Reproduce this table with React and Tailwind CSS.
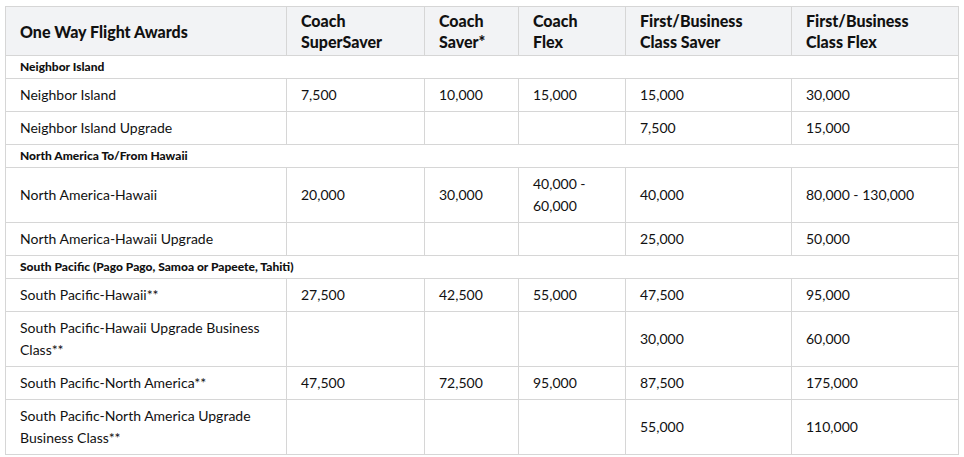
const columns = [
  "One Way Flight Awards",
  ["Coach", "SuperSaver"],
  ["Coach", "Saver*"],
  ["Coach", "Flex"],
  ["First/Business", "Class Saver"],
  ["First/Business", "Class Flex"],
];

const sections = [
  {
    title: "Neighbor Island",
    rows: [
      ["Neighbor Island", "7,500", "10,000", "15,000", "15,000", "30,000"],
      ["Neighbor Island Upgrade", "", "", "", "7,500", "15,000"],
    ],
  },
  {
    title: "North America To/From Hawaii",
    rows: [
      ["North America-Hawaii", "20,000", "30,000", "40,000 - 60,000", "40,000", "80,000 - 130,000"],
      ["North America-Hawaii Upgrade", "", "", "", "25,000", "50,000"],
    ],
  },
  {
    title: "South Pacific (Pago Pago, Samoa or Papeete, Tahiti)",
    rows: [
      ["South Pacific-Hawaii**", "27,500", "42,500", "55,000", "47,500", "95,000"],
      ["South Pacific-Hawaii Upgrade Business Class**", "", "", "", "30,000", "60,000"],
      ["South Pacific-North America**", "47,500", "72,500", "95,000", "87,500", "175,000"],
      ["South Pacific-North America Upgrade Business Class**", "", "", "", "55,000", "110,000"],
    ],
  },
];

const widths = ["w-[281px]", "w-[138px]", "w-[94px]", "w-[107px]", "w-[166px]", "w-[167px]"];

const App = () => {
  return (
    <div className="pl-[5px] pt-[6px] bg-white min-h-[457px] font-['Lato',Arial,sans-serif] text-[#111]">
      <table className="table-fixed border-collapse w-[954px]">
        <colgroup>
          {widths.map((w, i) => (
            <col key={i} className={w} />
          ))}
        </colgroup>
        <thead>
          <tr className="bg-[#f2f3f5]">
            {columns.map((c, i) => (
              <th
                key={i}
                className="border border-[#d6d6d6] pl-[14px] pr-2 py-[3px] text-left align-middle text-[16px] leading-[21px] font-black"
              >
                {Array.isArray(c) ? (
                  <>
                    {c[0]}
                    <br />
                    {c[1]}
                  </>
                ) : (
                  c
                )}
              </th>
            ))}
          </tr>
        </thead>
        <tbody>
          {sections.map((s) => (
            <>
              <tr key={s.title}>
                <td
                  colSpan={6}
                  className="border border-[#d6d6d6] pl-[14px] py-[4px] text-[12px] leading-[14px] font-black"
                >
                  {s.title}
                </td>
              </tr>
              {s.rows.map((r, i) => (
                <tr key={s.title + i}>
                  {r.map((cell, j) => (
                    <td
                      key={j}
                      className="border border-[#d6d6d6] pl-[14px] pr-3 py-[5px] text-[14px] leading-[22px] align-middle"
                    >
                      {cell}
                    </td>
                  ))}
                </tr>
              ))}
            </>
          ))}
        </tbody>
      </table>
    </div>
  );
};

export default App;
